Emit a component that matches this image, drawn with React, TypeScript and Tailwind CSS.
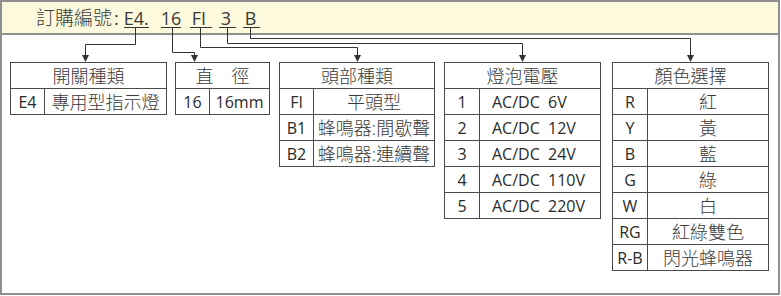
import React from "react";

type Row = { code: string; value: string; latin?: boolean };

const FONT = { fontFamily: '"Open Sans", "Noto Sans CJK TC", sans-serif' };

function Table({
  title,
  rows,
  width,
  firstW,
  className = "",
  leftValue = false,
}: {
  title: string;
  rows: Row[];
  width: string;
  firstW: string;
  className?: string;
  leftValue?: boolean;
}) {
  return (
    <div className={`border border-[#4a4a4a] flex flex-col shrink-0 ${width} ${className}`}>
      <div className="h-[25px] flex items-center justify-center text-[18px] font-light leading-none whitespace-pre text-[#3a3a3a]">
        {title}
      </div>
      {rows.map((r, i) => (
        <div key={i} className="h-[26px] border-t border-[#4a4a4a] flex">
          <div
            className={`${firstW} shrink-0 border-r border-[#4a4a4a] flex items-center justify-center leading-none text-[16px] text-[#2a2a2a]`}
          >
            {r.code}
          </div>
          <div
            className={`flex-1 flex items-center leading-none whitespace-pre ${
              leftValue ? "justify-start pl-[12px]" : "justify-center"
            } ${r.latin ? "text-[16px] text-[#2a2a2a]" : "text-[18px] font-light text-[#3a3a3a]"}`}
          >
            {r.value}
          </div>
        </div>
      ))}
    </div>
  );
}

function Connectors() {
  const c = "#333333";
  const arrow = (x: number) => (
    <polygon points={`${x - 3.5},55 ${x + 3.5},55 ${x},62`} fill={c} />
  );
  return (
    <svg
      className="absolute -left-[2px] -top-[2px] pointer-events-none"
      width={780}
      height={295}
      viewBox="0 0 780 295"
    >
      <g stroke={c} strokeWidth={1} fill="none">
        <path d="M135.5 27 V44.5 H85.5 V56" />
        <path d="M172.5 27 V52.5 H194.5 V56" />
        <path d="M200.5 27 V47.5 H357.5 V56" />
        <path d="M227.5 27 V43.5 H522.5 V56" />
        <path d="M250.5 27 V38.5 H690.5 V56" />
      </g>
      {arrow(85.5)}
      {arrow(194.5)}
      {arrow(357.5)}
      {arrow(522.5)}
      {arrow(690.5)}
    </svg>
  );
}

export default function App() {
  return (
    <div className="w-[781px] h-[296px] bg-white text-[#2e2e2e]" style={FONT}>
      <div className="relative w-[780px] h-[295px] border-2 border-[#8f8f8f] bg-white">
        <div className="h-[33px] bg-[#fcf9dc] border-b-2 border-[#8f8f8f] pl-[34px] pt-[8px] flex items-baseline text-[#3a3a3a]">
          <span className="text-[19px] leading-[17px] font-light">訂購編號</span>
          <span className="text-[18px] leading-[17px] ml-[2px]">:</span>
          <span className="ml-[5px] w-[25px] text-[18px] leading-[17px] border-b border-[#333] text-center">
            E4.
          </span>
          <span className="ml-[12px] w-[20px] text-[18px] leading-[17px] border-b border-[#333] text-center">
            16
          </span>
          <span className="ml-[9px] w-[22px] text-[18px] leading-[17px] border-b border-[#333] pl-[2px]">
            FI
          </span>
          <span className="ml-[7px] w-[17px] text-[18px] leading-[17px] border-b border-[#333] pl-[2px]">
            3
          </span>
          <span className="ml-[7px] w-[17px] text-[18px] leading-[17px] border-b border-[#333] pl-[2px]">
            B
          </span>
        </div>

        <div className="mt-[27px] pl-[8px] flex items-start">
          <Table
            title="開關種類"
            width="w-[157px]"
            firstW="w-[34px]"
            rows={[{ code: "E4", value: "專用型指示燈" }]}
          />
          <Table
            title={"直\u3000徑"}
            width="w-[95px]"
            firstW="w-[34px]"
            className="ml-[8px]"
            rows={[{ code: "16", value: "16mm", latin: true }]}
          />
          <Table
            title="頭部種類"
            width="w-[156px]"
            firstW="w-[34px]"
            className="ml-[9px]"
            rows={[
              { code: "FI", value: "平頭型" },
              { code: "B1", value: "蜂鳴器:間歇聲" },
              { code: "B2", value: "蜂鳴器:連續聲" },
            ]}
          />
          <Table
            title="燈泡電壓"
            width="w-[157px]"
            firstW="w-[35px]"
            className="ml-[9px]"
            leftValue
            rows={[
              { code: "1", value: "AC/DC  6V", latin: true },
              { code: "2", value: "AC/DC  12V", latin: true },
              { code: "3", value: "AC/DC  24V", latin: true },
              { code: "4", value: "AC/DC  110V", latin: true },
              { code: "5", value: "AC/DC  220V", latin: true },
            ]}
          />
          <Table
            title="顏色選擇"
            width="w-[157px]"
            firstW="w-[35px]"
            className="ml-[11px]"
            rows={[
              { code: "R", value: "紅" },
              { code: "Y", value: "黃" },
              { code: "B", value: "藍" },
              { code: "G", value: "綠" },
              { code: "W", value: "白" },
              { code: "RG", value: "紅綠雙色" },
              { code: "R-B", value: "閃光蜂鳴器" },
            ]}
          />
        </div>
        <Connectors />
      </div>
    </div>
  );
}
